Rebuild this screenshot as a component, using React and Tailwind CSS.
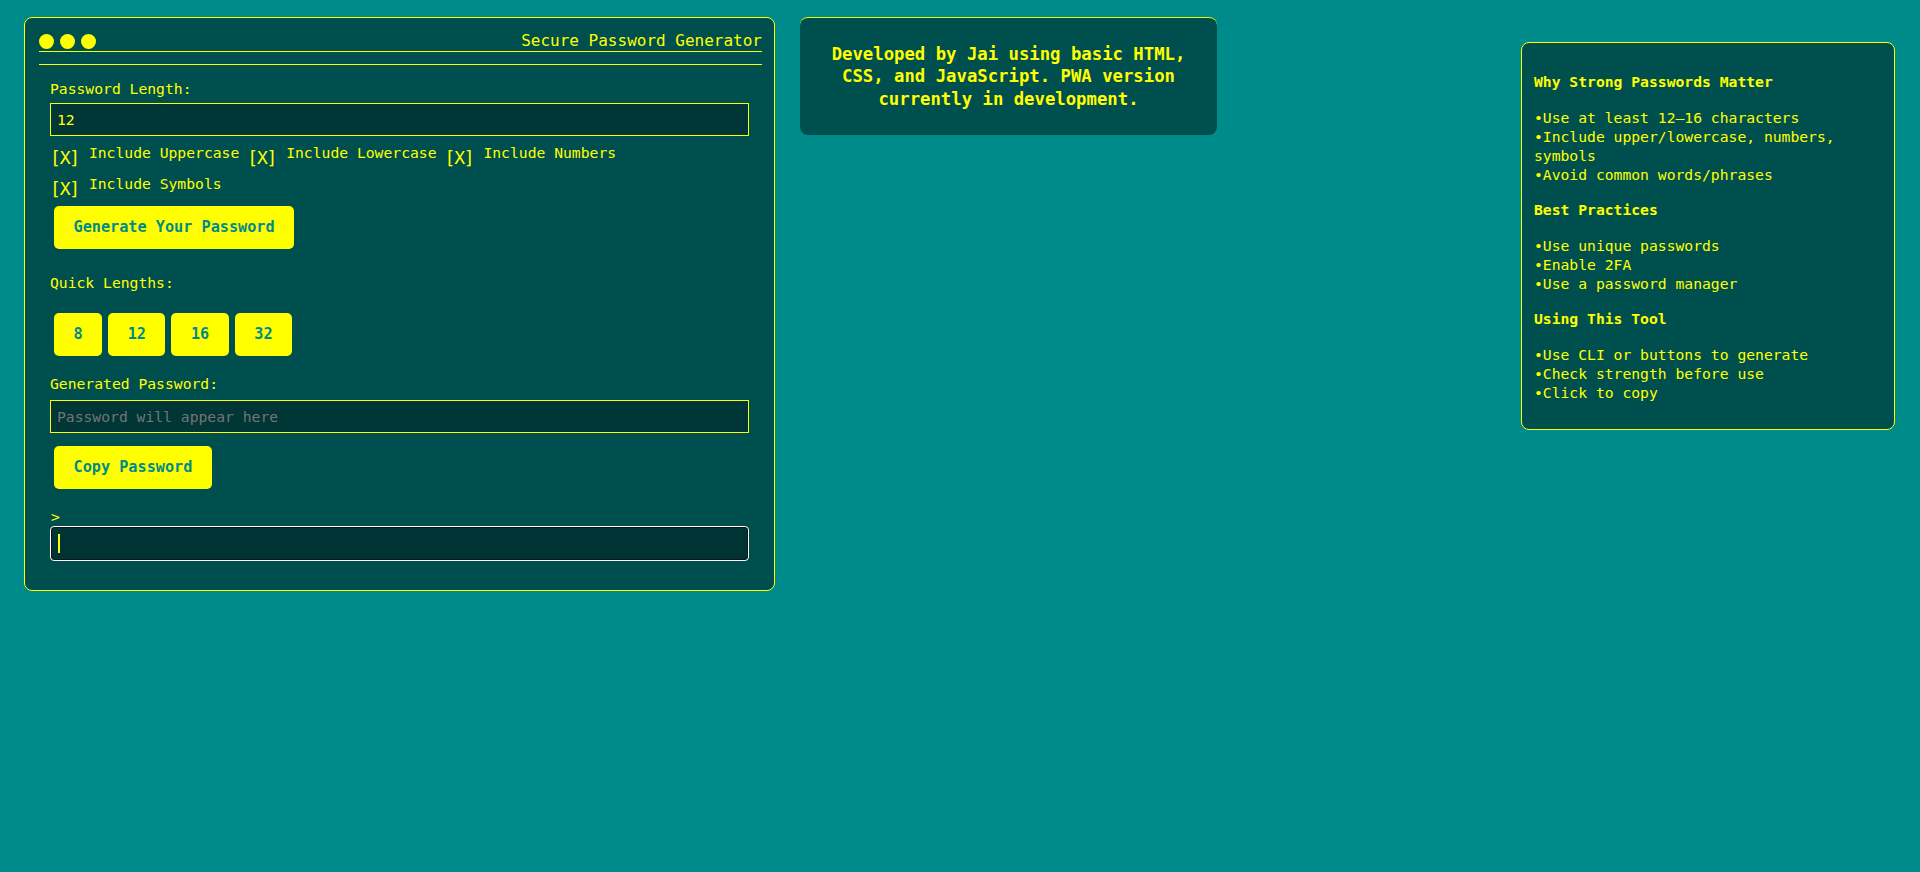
import React from "react";

const Y = "text-[#ffff00]";

function Check({ label }) {
  return (
    <div className="flex items-start">
      <span className="text-[18px] tracking-[-1.2px] leading-[20px] mt-[5px] text-[#ffff00]">[X]</span>
      <span className="ml-[10px] text-[14.7px] leading-[19px] text-[#ffff00]">{label}</span>
    </div>
  );
}

function YBtn({ children, className = "" }) {
  return (
    <button
      className={
        "bg-[#ffff00] text-[#008b8b] font-bold text-[15.2px] leading-[19px] py-[12px] px-[19.5px] rounded-[5px] " +
        className
      }
    >
      {children}
    </button>
  );
}

export default function App() {
  return (
    <div className="min-h-[872px] w-full bg-[#008b8b] flex items-start pl-[24px] pr-[25px] pt-[17px] font-['DejaVu_Sans_Mono',monospace]">
      <div className="flex items-start gap-[25px]">
        {/* Left panel */}
        <div className="w-[751px] bg-[#004f4f] border border-[#ffff00] rounded-[8px] pt-[13px] pb-[29px] pl-[14px] pr-[12px]">
          <div className="h-[20px] flex items-center justify-between border-b border-[#ffff00] box-content">
            <div className="flex gap-[6px]">
              <span className="w-[15px] h-[15px] rounded-full bg-[#ffff00]" />
              <span className="w-[15px] h-[15px] rounded-full bg-[#ffff00]" />
              <span className="w-[15px] h-[15px] rounded-full bg-[#ffff00]" />
            </div>
            <span className="text-[16px] leading-[20px] text-[#ffff00]">Secure Password Generator</span>
          </div>
          <div className="mt-[12px] border-t border-[#ffff00] pt-[14px] pl-[11px] pr-[13px] flex flex-col items-stretch">
            <div className="text-[14.7px] leading-[19px] text-[#ffff00]">Password Length:</div>
            <input
              readOnly
              value="12"
              className="mt-[5px] h-[33px] w-full bg-[#003636] border border-[#ffff00] pl-[6px] text-[14.7px] text-[#ffff00] outline-none font-['DejaVu_Sans_Mono',monospace]"
            />
            <div className="mt-[7px] flex flex-wrap gap-x-[8px] gap-y-[6px]">
              <Check label="Include Uppercase" />
              <Check label="Include Lowercase" />
              <Check label="Include Numbers" />
              <Check label="Include Symbols" />
            </div>
            <div className="mt-[7px]">
              <YBtn className="ml-[4px]">Generate Your Password</YBtn>
            </div>
            <div className="mt-[24px] text-[14.7px] leading-[19px] text-[#ffff00]">Quick Lengths:</div>
            <div className="mt-[21px] ml-[4px] flex gap-[6px]">
              <YBtn>8</YBtn>
              <YBtn>12</YBtn>
              <YBtn>16</YBtn>
              <YBtn>32</YBtn>
            </div>
            <div className="mt-[18px] text-[14.7px] leading-[19px] text-[#ffff00]">Generated Password:</div>
            <input
              readOnly
              placeholder="Password will appear here"
              className="mt-[7px] h-[33px] w-full bg-[#003636] border border-[#ffff00] pl-[6px] text-[14.7px] text-[#ffff00] placeholder:text-[#757575] outline-none font-['DejaVu_Sans_Mono',monospace]"
            />
            <div className="mt-[13px]">
              <YBtn className="ml-[4px]">Copy Password</YBtn>
            </div>
            <div className="mt-[20px] text-[14.7px] leading-[16px] text-[#ffff00] pl-[1px]">&gt;</div>
            <div className="mt-[1px] h-[35px] w-full bg-[#003434] border border-white rounded-[4px] shadow-[inset_0_0_0_1px_#111111] flex items-center pl-[6.5px]">
              <span className="w-[2px] h-[19px] bg-[#ffff00]" />
            </div>
          </div>
        </div>

        {/* Middle panel */}
        <div className="w-[417px] bg-[#004f4f] border-t border-[#e8f80a] rounded-[8px] pt-[25px] pb-[25px] px-[20px] text-center">
          <p className="font-bold text-[17.3px] leading-[22.3px] text-[#ffff00]">
            Developed by Jai using basic HTML, CSS, and JavaScript. PWA version currently in development.
          </p>
        </div>
      </div>

      {/* Right panel */}
      <div className={"ml-auto mt-[25px] w-[374px] bg-[#004f4f] border border-[#ffff00] rounded-[8px] pt-[29px] pb-[27px] px-[12px] text-[14.7px] leading-[19px] " + Y}>
        <div className="font-bold mb-[17px]">Why Strong Passwords Matter</div>
        <div>•Use at least 12–16 characters</div>
        <div>•Include upper/lowercase, numbers, symbols</div>
        <div>•Avoid common words/phrases</div>
        <div className="font-bold mt-[16px] mb-[17px]">Best Practices</div>
        <div>•Use unique passwords</div>
        <div>•Enable 2FA</div>
        <div>•Use a password manager</div>
        <div className="font-bold mt-[16px] mb-[17px]">Using This Tool</div>
        <div>•Use CLI or buttons to generate</div>
        <div>•Check strength before use</div>
        <div>•Click to copy</div>
      </div>
    </div>
  );
}
